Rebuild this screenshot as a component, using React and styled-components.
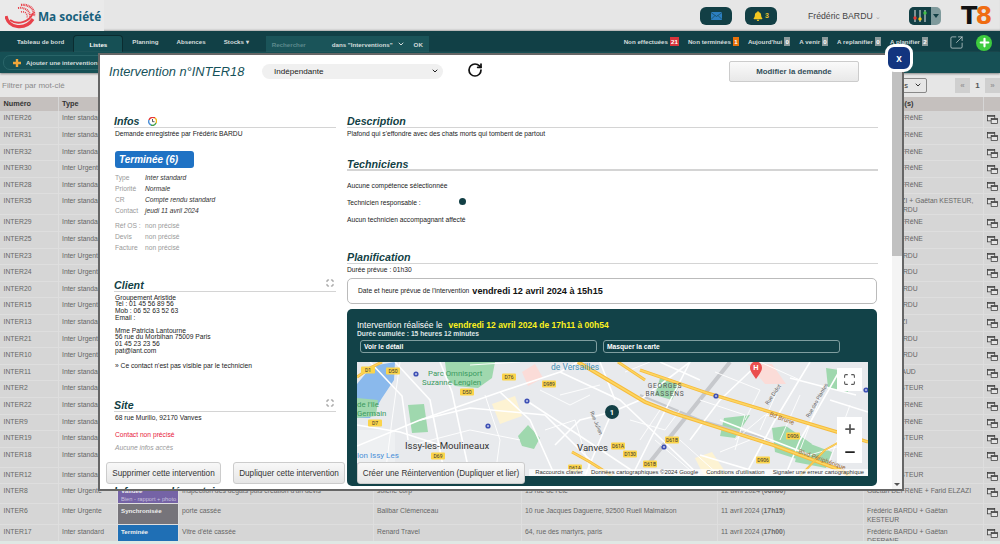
import React from "react";
import styled, { createGlobalStyle } from "styled-components";
import { Maximize, Minus, Plus, RotateCw, SquareArrowOutUpRight, ChevronDown } from "lucide-react";
import { FaBell } from "react-icons/fa";

const GlobalStyle = createGlobalStyle`
  html, body {
    margin: 0;
    height: 544px;
    overflow: hidden;
    background: #dfe8e4;
    font-family: "Liberation Sans", Arial, sans-serif;
  }
  * { box-sizing: border-box; }
`;

const Page = styled.div`
  position: relative;
  width: 1000px;
  height: 544px;
  overflow: hidden;
`;

/* ---------- top bars ---------- */

const TopBar = styled.header`
  height: 31px;
  background: #e6e6e6;
  display: flex;
  align-items: center;
  box-shadow: inset 0 -2px 2px -1px #aaa;
`;

const Brand = styled.div`
  width: 104px;
  height: 31px;
  padding-left: 5px;
  display: flex;
  align-items: center;
  background: #eaeaea;
`;

const BrandName = styled.span`
  color: #17607c;
  font-size: 11.8px;
  font-weight: 700;
  font-family: "Open Sans", sans-serif;
  white-space: nowrap;
`;

const TopTools = styled.div`
  margin-left: auto;
  display: flex;
  align-items: center;
`;

const RoundBtn = styled.div`
  width: 32px;
  height: 18px;
  margin-right: ${(p) => p.$mr}px;
  border-radius: 6px;
  background: #123f45;
  display: flex;
  align-items: center;
  justify-content: center;
  gap: 2px;
  color: #e8c02c;
  font-size: 7px;
  font-weight: 700;
`;

const UserName = styled.div`
  width: 101px;
  color: #444;
  font-size: 8.7px;
  white-space: nowrap;
  span { color: #aaa; font-size: 7px; }
`;

const Mixer = styled.div`
  width: 32px;
  height: 18px;
  margin-right: 20px;
  border-radius: 5px;
  overflow: hidden;
  display: flex;
  background: #7f9a9c;
`;

const MixerFace = styled.div`
  width: 22px;
  background: #123f45;
  display: flex;
  align-items: center;
  justify-content: center;
`;

const MixerCaret = styled.div`
  flex: 1;
  display: flex;
  align-items: center;
  justify-content: center;
  &::after {
    content: "";
    border: 3px solid transparent;
    border-top: 4px solid #123f45;
    border-bottom: 0;
  }
`;

const Logo8 = styled.div`
  width: 39px;
  font-size: 24px;
  line-height: 24px;
  font-weight: 700;
  letter-spacing: -2px;
  color: #111;
  font-family: "DejaVu Sans", sans-serif;
  span { color: #ef6c12; }
`;

const NavBar = styled.nav`
  height: 21px;
  background: #114046;
  display: flex;
  align-items: flex-end;
  color: #d4dcdc;
  font-size: 6.2px;
  font-weight: 700;
`;

const NavItem = styled.div`
  height: 21px;
  padding-top: 7px;
  margin-left: ${(p) => p.$ml}px;
  white-space: nowrap;
`;

const NavTab = styled.div`
  width: 50px;
  height: 17px;
  margin-left: 9px;
  padding-top: 5px;
  text-align: center;
  color: #fff;
  background: #165055;
  border: 1px solid #0b2c30;
  border-bottom: 0;
  border-radius: 4px 4px 0 0;
`;

const SearchBox = styled.div`
  width: 163px;
  height: 16px;
  margin-left: 17px;
  padding-left: 6px;
  background: #1a5459;
  display: flex;
  align-items: center;
  white-space: nowrap;
`;

const SearchHint = styled.span`
  width: 60px;
  color: #5d8a8d;
`;

const Counters = styled.div`
  margin-left: auto;
  height: 21px;
  padding-top: 6px;
  display: flex;
  gap: 9px;
`;

const Counter = styled.div`
  display: flex;
  gap: 2px;
  white-space: nowrap;
  line-height: 9px;
`;

const Badge = styled.span`
  min-width: 6px;
  padding: 0 1px;
  height: 9px;
  color: #fff;
  text-align: center;
  background: ${(p) => p.$bg};
`;

const NavIcons = styled.div`
  width: 72px;
  height: 21px;
  padding: 2px 8px 0 21px;
  display: flex;
  align-items: center;
  justify-content: space-between;
`;

const GreenPlus = styled.div`
  width: 16px;
  height: 16px;
  border-radius: 50%;
  background: #3ecb3e;
  display: flex;
  align-items: center;
  justify-content: center;
`;

const SubBar = styled.div`
  height: 21px;
  background: #165055;
  padding: 3px 3px;
  box-shadow: 0 1px 2px #888;
  position: relative;
`;

const AddPill = styled.div`
  width: 110px;
  height: 15px;
  border: 1px solid #2a6569;
  border-radius: 7px;
  padding-left: 9px;
  display: flex;
  align-items: center;
  gap: 5px;
  color: #d4dcdc;
  font-size: 6.2px;
  font-weight: 700;
  white-space: nowrap;
`;

const FilterBar = styled.div`
  height: 24px;
  background: #e6e6e6;
  display: flex;
  align-items: center;
  padding-left: 2px;
`;

const FilterHint = styled.span`
  color: #8a8a8a;
  font-size: 8px;
`;

const PageSize = styled.div`
  margin-left: auto;
  width: 42px;
  height: 15px;
  border: 1px solid #888;
  border-radius: 2px;
  display: flex;
  align-items: center;
  justify-content: flex-end;
  gap: 6px;
  padding-right: 4px;
  color: #333;
  font-size: 7.5px;
`;

const Pager = styled.div`
  margin-left: 28px;
  display: flex;
  height: 15px;
  color: #888;
  font-size: 8px;
  font-weight: 700;
`;

const PagerCell = styled.div`
  width: 15px;
  display: flex;
  align-items: center;
  justify-content: center;
  background: ${(p) => (p.$on ? "#e6e6e6" : "#cfcfcf")};
  color: ${(p) => (p.$on ? "#555" : "#999")};
`;

/* ---------- table behind the modal ---------- */

const TableClip = styled.div`
  height: 444px;
  overflow: hidden;
`;

const Table = styled.table`
  width: 1000px;
  table-layout: fixed;
  border-collapse: collapse;
  font-size: 6.8px;
  line-height: 8.5px;
  color: #666;
`;

const Th = styled.th`
  height: 14px;
  padding: 0 3px 0 3.5px;
  text-align: left;
  font-size: 7.3px;
  color: #333;
  background: #c5c0be;
  border-right: 1px solid #d6d6d6;
  white-space: nowrap;
`;

const Row = styled.tr`
  height: ${(p) => (p.$tall ? 20 : 16.6)}px;
`;

const Td = styled.td`
  padding: 3px 3px 0 3.5px;
  vertical-align: top;
  background: #d6d6d6;
  border: 1px solid #dedede;
  border-width: 0 1px 1px 0;
  overflow: hidden;
`;

const StatusTd = styled(Td)`
  background: ${(p) => p.$bg};
  color: #eee;
  font-weight: 700;
  font-size: 6.2px;
  small {
    display: block;
    font-size: 5.7px;
    line-height: 7px;
    font-weight: 400;
    color: #c9c0de;
    white-space: nowrap;
  }
`;

const IconTd = styled(Td)`
  padding: 4px 0 0 3px;
`;

const TimeText = styled.b`
  color: #666;
`;

/* ---------- modal ---------- */

const Modal = styled.section`
  position: absolute;
  left: 98px;
  top: 53px;
  width: 806px;
  height: 438px;
  border: 2px solid #666;
  background: #fff;
  display: flex;
`;

const CloseBtn = styled.div`
  position: absolute;
  top: -11px;
  right: -11px;
  width: 28px;
  height: 28px;
  border: 3px solid #fff;
  border-radius: 9px;
  background: #12357f;
  color: #fff;
  font-size: 10px;
  font-weight: 700;
  display: flex;
  align-items: center;
  justify-content: center;
  z-index: 3;
`;

const ModalMain = styled.div`
  flex: 1;
  overflow: hidden;
  position: relative;
`;

const Scrollbar = styled.div`
  width: 10px;
  background: #f4f4f4;
  position: relative;
  &::before {
    content: "";
    display: block;
    height: 201px;
    background: #c1c1c1;
  }
  &::after {
    content: "";
    position: absolute;
    left: 2px;
    bottom: 3px;
    border: 3px solid transparent;
    border-top: 3px solid #555;
    border-bottom: 0;
  }
`;

const ModalHead = styled.div`
  height: 32px;
  padding-left: 9px;
  display: flex;
  align-items: center;
`;

const ModalTitle = styled.h1`
  margin: 0;
  width: 153px;
  font-size: 12.8px;
  font-style: italic;
  font-weight: 400;
  color: #16525a;
  white-space: nowrap;
`;

const StateSelect = styled.div`
  width: 181px;
  height: 15px;
  padding: 0 4px 0 12px;
  border-radius: 8px;
  background: #f0f0f0;
  display: flex;
  align-items: center;
  justify-content: space-between;
  font-size: 8.1px;
  color: #222;
`;

const RefreshSlot = styled.div`
  width: 286px;
  padding-left: 24px;
  display: flex;
  align-items: center;
  margin-top: -2px;
`;

const EditBtn = styled.div`
  width: 130px;
  height: 21px;
  border: 1px solid #ccc;
  border-radius: 2px;
  background: linear-gradient(#fafafa, #e8e8e8);
  display: flex;
  align-items: center;
  justify-content: center;
  font-size: 7.8px;
  font-weight: 700;
  color: #33505a;
`;

const Columns = styled.div`
  margin-top: 28px;
  padding-left: 14px;
  display: flex;
  gap: 11px;
  font-size: 6.7px;
  line-height: 8px;
  color: #222;
`;

const LeftCol = styled.div`
  width: 222px;
  flex: none;
  & > p, & > div, & > dl { margin-left: 1px; }
`;

const RightCol = styled.div`
  width: 531px;
  flex: none;
`;

const Heading = styled.h2`
  margin: ${(p) => p.$mt || 0}px 0 0;
  height: 13px;
  border-bottom: ${(p) => (p.$thick ? 2 : 1)}px solid #d4d4d4;
  font-size: 10.7px;
  line-height: 12px;
  font-style: italic;
  font-weight: 700;
  color: #123f45;
  display: flex;
  align-items: flex-start;
  justify-content: space-between;
  padding-right: 2px;
  white-space: nowrap;
`;

const HeadLeft = styled.span`
  display: flex;
  gap: 8px;
  align-items: center;
`;

const Para = styled.p`
  margin: ${(p) => p.$mt || 0}px 0 0;
  color: ${(p) => p.$color || "#222"};
  font-style: ${(p) => (p.$italic ? "italic" : "normal")};
`;

const Block = styled.div`
  margin-top: ${(p) => p.$mt}px;
  line-height: 6.8px;
`;

const StatusChip = styled.div`
  margin-top: 13px;
  width: 79px;
  height: 17px;
  padding-left: 4px;
  border-radius: 3px;
  background: #1f72c4;
  color: #fff;
  font-size: 10px;
  line-height: 17px;
  font-weight: 700;
  font-style: italic;
`;

const Details = styled.dl`
  margin-top: ${(p) => p.$mt}px;
  margin-bottom: 0;
  margin-right: 0;
  display: grid;
  grid-template-columns: 30px 1fr;
  grid-auto-rows: 11px;
  align-items: center;
  dt { color: #999; }
  dd {
    margin: 0;
    font-style: ${(p) => (p.$plain ? "normal" : "italic")};
    color: ${(p) => (p.$plain ? "#999" : "#333")};
  }
`;

const TechLine = styled.div`
  margin-top: ${(p) => p.$mt}px;
  display: flex;
  align-items: flex-start;
`;

const TechDot = styled.span`
  width: 7px;
  height: 7px;
  margin: -1px 0 0 38px;
  border-radius: 50%;
  background: #123f45;
`;

const PlannedBox = styled.div`
  margin-top: 4px;
  width: 530px;
  height: 26px;
  padding-left: 10px;
  border: 1px solid #bbb;
  border-radius: 5px;
  display: flex;
  align-items: center;
  gap: 3px;
  b { font-size: 9.1px; color: #111; }
`;

const Panel = styled.div`
  margin-top: 5px;
  width: 530px;
  height: 177px;
  padding: 11px 9px 10px 10px;
  border-radius: 5px;
  background: #124248;
  color: #fff;
`;

const DoneLine = styled.div`
  font-size: 8.5px;
  line-height: 10px;
  display: flex;
  gap: 6px;
  b { color: #fdf01e; }
`;

const DoneSub = styled.div`
  font-weight: 700;
  color: #dfe6e6;
  line-height: 7px;
`;

const PanelBtns = styled.div`
  margin: 3px 0 9px 3px;
  display: flex;
  gap: 6px;
`;

const PanelBtn = styled.div`
  width: 237px;
  height: 13px;
  padding-left: 3px;
  border: 1px solid #7f9ea0;
  border-radius: 3px;
  font-weight: 700;
  line-height: 11px;
`;

const MapBox = styled.div`
  position: relative;
  width: 511px;
  height: 114px;
  overflow: hidden;
  background: #e8eaed;
  svg { display: block; }
`;

const MapCtrl = styled.div`
  position: absolute;
  left: 480px;
  top: ${(p) => p.$top}px;
  width: 25px;
  background: #fff;
  color: #555;
  display: flex;
  flex-direction: column;
  align-items: center;
  justify-content: center;
`;

const CtrlCell = styled.div`
  height: ${(p) => p.$h}px;
  width: 100%;
  display: flex;
  align-items: center;
  justify-content: center;
`;

const Attribution = styled.div`
  position: absolute;
  right: 0;
  bottom: 0;
  width: 339px;
  height: 7px;
  padding-right: 4px;
  display: flex;
  justify-content: flex-end;
  gap: 8px;
  background: rgba(255, 255, 255, 0.7);
  color: #333;
  font-size: 5.9px;
  line-height: 7px;
  white-space: nowrap;
`;

const FooterBtns = styled.div`
  position: absolute;
  left: 6px;
  top: 407px;
  display: flex;
  gap: 12px;
`;

const FooterBtn = styled.div`
  width: ${(p) => p.$w}px;
  height: 22px;
  border: 1px solid #ccc;
  border-radius: 3px;
  background: linear-gradient(#f8f8f8, #e6e6e6);
  color: #333;
  font-size: 8.2px;
  display: flex;
  align-items: center;
  justify-content: center;
  white-space: nowrap;
`;

/* ---------- drawings ---------- */

const LogoMark = () => (
  <svg width="33" height="26" viewBox="0 0 33 26">
    <g fill="none" stroke="#e8414a">
      <path d="M1 13 C3 25 20 28 28 16" strokeWidth="3.2" />
      <path d="M5 17 C12 22 24 20 28 10" strokeWidth="2" />
      <path d="M16 2 C24 1 30 6 29 13" strokeWidth="2.4" strokeDasharray="1 .6" />
      <path d="M13 5 C20 4 26 8 25 15" strokeWidth="2" strokeDasharray="1 .8" />
      <path d="M16 9 C20 8 23 11 22 15" strokeWidth="1.6" strokeDasharray="1 1" />
    </g>
  </svg>
);

const MailIcon = () => (
  <svg width="11" height="8" viewBox="0 0 11 8">
    <rect width="11" height="8" rx="0.6" fill="#2c7fc0" />
    <path d="M0 .5 L5.5 4.5 L11 .5 M0 7.5 L4 3.5 M11 7.5 L7 3.5" stroke="#123f45" strokeWidth=".6" fill="none" />
  </svg>
);

const MixerIcon = () => (
  <svg width="16" height="14" viewBox="0 0 16 14">
    <g stroke="#e8e8e8" strokeWidth="1">
      <path d="M3 1V13M8 1V13M13 1V13" />
    </g>
    <circle cx="3" cy="9" r="1.7" fill="#e53935" />
    <circle cx="8" cy="10" r="1.7" fill="#f5c518" />
    <circle cx="13" cy="4" r="1.7" fill="#43c048" />
  </svg>
);

const OrangePlus = () => (
  <svg width="8" height="8" viewBox="0 0 8 8">
    <path d="M4 0V8M0 4H8" stroke="#f0a63a" strokeWidth="2.4" />
  </svg>
);

const WindowsIcon = () => (
  <svg width="11" height="9" viewBox="0 0 12 10">
    <g fill="#e4e4e4" stroke="#333" strokeWidth=".8">
      <rect x=".5" y=".5" width="8" height="6" />
      <rect x="4.5" y="4" width="7" height="5.5" />
    </g>
    <path d="M.5 1.4H8.5M4.5 4.9H11.5" stroke="#333" strokeWidth="1" />
  </svg>
);

const ClockMark = () => (
  <svg width="9" height="9" viewBox="0 0 9 9">
    <g fill="none" strokeWidth="1.4">
      <path d="M1 3A4 4 0 0 1 7 1" stroke="#e53935" />
      <path d="M7 1A4 4 0 0 1 8 6" stroke="#f5b916" />
      <path d="M8 6A4 4 0 0 1 3 8" stroke="#43a047" />
      <path d="M3 8A4 4 0 0 1 1 3" stroke="#4a8fd8" />
    </g>
    <path d="M4.5 2V4.7H6.5" stroke="#333" strokeWidth=".8" fill="none" />
  </svg>
);

const whiteRoads = [
  "357,446 420,420 500,392 560,372 578,362",
  "420,420 470,408 545,415 600,470",
  "440,362 452,392 470,476",
  "395,362 430,400 445,476",
  "500,392 530,420 555,476",
  "527,401 580,436 640,476",
  "560,372 620,400 700,476",
  "612,412 640,400 690,362",
  "612,412 600,440 585,476",
  "612,412 580,420 555,445",
  "690,362 650,440 632,476",
  "760,362 720,400 690,440",
  "810,362 775,420 745,476",
  "840,370 800,440 785,476",
  "790,378 856,395",
  "720,420 810,455",
  "700,455 770,476",
  "357,425 400,432 440,445",
  "370,362 402,396 408,440",
  "600,362 615,400",
  "660,362 700,380",
  "830,400 868,412",
];

const thinRoads = [
  "400,362 392,420 385,476",
  "412,445 470,430 520,440",
  "470,365 520,362",
  "485,395 500,440 495,476",
  "540,390 570,405 590,395",
  "545,430 575,420 590,470",
  "625,372 650,362",
  "630,420 665,430 680,410",
  "655,440 690,470",
  "700,400 745,415 735,450",
  "715,372 760,390 745,420",
  "735,440 765,415 800,420",
  "780,385 760,430",
  "800,395 780,440",
  "820,398 800,450",
  "850,405 830,460",
  "760,362 800,380",
  "810,455 860,440",
  "660,410 640,440",
  "680,440 720,476",
  "720,452 750,440",
  "560,395 600,385",
];

const yellowRoads = [
  { d: "640,370 707,393 837,432 868,442", w: 3.4 },
  { d: "578,362 645,402 673,413 773,445 840,470 850,476", w: 3.8 },
  { d: "618,362 645,380", w: 3 },
  { d: "357,377 370,368 382,362", w: 3 },
  { d: "572,452 590,462 612,476", w: 3 },
  { d: "800,476 825,450 850,436", w: 2 },
];

const greens = [
  "445,362 495,362 492,378 478,388 455,386 447,378",
  "408,405 424,404 428,432 412,433",
  "518,436 528,425 540,438 534,449 522,446",
  "357,398 378,400 376,416 357,418",
  "724,418 750,415 735,438 720,436",
  "772,428 786,426 812,444 800,460 775,452",
  "800,440 832,452 826,468 795,462",
  "826,368 852,372 848,392 828,388",
  "660,378 680,384 672,400 655,395",
];

const metro = [
  [416, 374], [527, 401], [488, 426], [716, 396], [664, 447], [866, 390],
];

const shields = [
  ["D1", 368, 370], ["D50", 393, 371], ["D76", 509, 377], ["D989", 549, 384],
  ["D50", 467, 392], ["D7", 375, 423], ["D69", 438, 456], ["D61A", 618, 446],
  ["D130", 630, 454], ["D61B", 672, 440], ["D61B", 650, 464], ["D906", 793, 436],
  ["D906", 763, 460], ["D61A", 575, 468],
];

const MapDrawing = () => (
  <svg width="511" height="114" viewBox="357 362 511 114" fontFamily="Roboto, sans-serif">
    <rect x="357" y="362" width="511" height="114" fill="#e8eaed" />
    <path d="M357 384 L372 366 L395 362 L394 380 L382 398 L370 418 L357 418Z" fill="#8ab9ec" />
    <path d="M357 430 H395 V476 H357Z" fill="#eef0f2" />
    <path d="M492 404 L515 396 L522 416 L500 424Z" fill="#fdf3d3" />
    <path d="M695 458 L712 452 L728 476 L704 476Z" fill="#fdf3d3" />
    <path d="M748 364 L772 364 L786 384 L765 384Z" fill="#fbdcd8" />
    <path d="M522 372 L535 364 L543 378 L528 386Z" fill="#fbdcd8" />
    {greens.map((p) => (
      <polygon key={p} points={p} fill="#9fd8ae" />
    ))}
    <polyline points="730,362 690,412 650,462" fill="none" stroke="#c6c8cc" strokeWidth="4" />
    <polyline points="640,395 700,420 770,440" fill="none" stroke="#c6c8cc" strokeWidth="2" />
    {thinRoads.map((p) => (
      <polyline key={p} points={p} fill="none" stroke="#fff" strokeWidth="0.9" />
    ))}
    {whiteRoads.map((p) => (
      <polyline key={p} points={p} fill="none" stroke="#fff" strokeWidth="1.6" />
    ))}
    {yellowRoads.map((r) => (
      <g key={r.d} fill="none">
        <polyline points={r.d} stroke="#f6bb3c" strokeWidth={r.w} />
        <polyline points={r.d} stroke="#fdd663" strokeWidth={r.w / 2.2} />
      </g>
    ))}
    {metro.map(([x, y]) => (
      <g key={x}>
        <circle cx={x} cy={y} r="2.6" fill="#3f51b5" />
        <circle cx={x} cy={y} r="1" fill="#c5cae9" />
      </g>
    ))}
    {shields.map(([t, x, y]) => (
      <g key={t + x}>
        <rect x={x - 7} y={y - 3.5} width="14" height="7" rx="1" fill="#fbd44a" />
        <text x={x} y={y + 2} textAnchor="middle" fontSize="5" fill="#333">{t}</text>
      </g>
    ))}
    <g fontSize="7.8" fill="#3c9a5f">
      <text x="428" y="376">Parc Omnisport</text>
      <text x="422" y="385">Suzanne Lenglen</text>
      <text x="357" y="407">de l'Ile</text>
      <text x="357" y="416">Germain</text>
    </g>
    <text x="551" y="370" fontSize="8.5" fill="#3f8fb5">de Versailles</text>
    <g fontSize="8" fill="#4a8fd8">
      <text x="357" y="458">lon Issy Les</text>
      <text x="357" y="467">ulineaux</text>
    </g>
    <text x="405" y="449" fontSize="9.6" fill="#333">Issy-les-Moulineaux</text>
    <text x="577" y="451" fontSize="9.6" fill="#333">Vanves</text>
    <g fontSize="6.6" fill="#555" letterSpacing=".8" textAnchor="middle">
      <text x="665" y="388">GEORGES</text>
      <text x="665" y="396">BRASSENS</text>
    </g>
    <text x="0" y="0" fontSize="5.4" fill="#666" transform="translate(590,412) rotate(68)">Rue Julien</text>
    <text x="0" y="0" fontSize="5.4" fill="#666" transform="translate(768,405) rotate(-55)">Rue Didot</text>
    <text x="0" y="0" fontSize="5.4" fill="#666" transform="translate(809,418) rotate(-60)">Rue des Plantes</text>
    <text x="0" y="0" fontSize="6.4" fill="#9a6a3c" transform="translate(769,416) rotate(20)">Bd Brune</text>
    <text x="0" y="0" fontSize="6.4" fill="#9a6a3c" transform="translate(798,453) rotate(20)">Blvd Périphérique</text>
    <circle cx="612" cy="412" r="7" fill="#123f45" />
    <text x="612" y="415" textAnchor="middle" fontSize="7.5" fontWeight="700" fill="#fff">1</text>
    <path d="M756 379 C752 373 750 371 750 367.500 A6 6 0 0 1 762 367.500 C762 371 760 373 756 379Z" fill="#ea4f4f" />
    <text x="756" y="370" textAnchor="middle" fontSize="7.5" fontWeight="700" fill="#fff">H</text>
  </svg>
);

/* ---------- data ---------- */

const columns = ["Numéro", "Type", "Statut", "Description", "Client", "Adresse", "Date", "Technicien(s)", ""];
const widths = [58, 59, 61, 195, 148, 196, 146, 120, 17];

const STD = "Inter standard";
const URG = "Inter Urgente";
const GD = "Gaëtan DEFRêNE";
const FB = "Frédéric BARDU";
const GK = "Gaëtan KESTEUR";

const rows = [
  { id: "INTER26", type: STD, tech: GD },
  { id: "INTER31", type: STD, tech: GD },
  { id: "INTER32", type: STD, tech: GD },
  { id: "INTER30", type: URG, tech: GD },
  { id: "INTER28", type: STD, tech: GD },
  { id: "INTER35", type: STD, tech: "Farid ELZAZI + Gaëtan KESTEUR, Frédéric BARDU", tall: true },
  { id: "INTER29", type: STD, tech: GD },
  { id: "INTER25", type: STD, tech: GD },
  { id: "INTER23", type: URG, tech: FB },
  { id: "INTER24", type: URG, tech: FB },
  { id: "INTER20", type: STD, tech: FB },
  { id: "INTER15", type: URG, tech: FB },
  { id: "INTER13", type: STD, tech: "Farid ELZAZI" },
  { id: "INTER21", type: URG, tech: FB },
  { id: "INTER10", type: URG, tech: FB },
  { id: "INTER11", type: STD, tech: "Bruno RENAUD" },
  { id: "INTER2", type: STD, tech: GK },
  { id: "INTER22", type: STD, tech: GD },
  { id: "INTER9", type: STD, tech: GD },
  { id: "INTER19", type: STD, tech: GK },
  { id: "INTER18", type: STD, tech: GD, tall: true },
  { id: "INTER12", type: STD, tech: GK },
  {
    id: "INTER8", type: URG, tall: true, status: "Validée", sub: "Bien - rapport + photo", bg: "#7563a6",
    desc: "Inspection des dégâts puis création d'un devis", client: "solène corp", addr: "13 rue de l'été",
    date: "12 avril 2024", time: "06h00", tech: "Gaëtan DEFRêNE + Farid ELZAZI",
  },
  {
    id: "INTER6", type: URG, tall: true, status: "Synchronisée", bg: "#76747a",
    desc: "porte cassée", client: "Balibar Clémenceau", addr: "10 rue Jacques Daguerre, 92500 Rueil Malmaison",
    date: "11 avril 2024", time: "17h15", tech: "Frédéric BARDU + Gaëtan KESTEUR",
  },
  {
    id: "INTER17", type: STD, tall: true, status: "Terminée", bg: "#1f6fb5",
    desc: "Vitre d'été cassée", client: "Renard Travel", addr: "64, rue des martyrs, paris",
    date: "11 avril 2024", time: "17h00", tech: "Frédéric BARDU + Gaëtan DEFRêNE",
  },
];

const counters = [
  ["Non effectuées", 21, "#d8343c"],
  ["Non terminées", 1, "#e8720c"],
  ["Aujourd'hui", 0, "#8b9a9b"],
  ["A venir", 0, "#8b9a9b"],
  ["A replanifier", 0, "#8b9a9b"],
  ["A planifier", 2, "#8b9a9b"],
];

export default function App() {
  return (
    <Page>
      <GlobalStyle />
      <TopBar>
        <Brand>
          <LogoMark />
          <BrandName>Ma société</BrandName>
        </Brand>
        <TopTools>
          <RoundBtn $mr={13}><MailIcon /></RoundBtn>
          <RoundBtn $mr={31}><FaBell size={10} color="#f2c61f" />3</RoundBtn>
          <UserName>Frédéric BARDU <span>⌄</span></UserName>
          <Mixer>
            <MixerFace><MixerIcon /></MixerFace>
            <MixerCaret />
          </Mixer>
          <Logo8>T<span>8</span></Logo8>
        </TopTools>
      </TopBar>

      <NavBar>
        <NavItem $ml={17}>Tableau de bord</NavItem>
        <NavTab>Listes</NavTab>
        <NavItem $ml={9}>Planning</NavItem>
        <NavItem $ml={18}>Absences</NavItem>
        <NavItem $ml={18}>Stocks ▾</NavItem>
        <SearchBox>
          <SearchHint>Rechercher</SearchHint>
          dans "Interventions"
          <ChevronDown size={8} strokeWidth={3} style={{ margin: "0 9px 0 4px" }} />
          OK
        </SearchBox>
        <Counters>
          {counters.map(([label, n, bg]) => (
            <Counter key={label}>{label} <Badge $bg={bg}>{n}</Badge></Counter>
          ))}
        </Counters>
        <NavIcons>
          <SquareArrowOutUpRight size={15} strokeWidth={1} color="#e8eeee" />
          <GreenPlus><Plus size={13} strokeWidth={4} color="#fff" /></GreenPlus>
        </NavIcons>
      </NavBar>

      <SubBar>
        <AddPill><OrangePlus />Ajouter une intervention</AddPill>
      </SubBar>

      <FilterBar>
        <FilterHint>Filtrer par mot-clé</FilterHint>
        <PageSize>lignes <ChevronDown size={8} strokeWidth={3} /></PageSize>
        <Pager>
          <PagerCell>«</PagerCell>
          <PagerCell $on>1</PagerCell>
          <PagerCell>»</PagerCell>
        </Pager>
      </FilterBar>

      <TableClip>
        <Table>
          <colgroup>
            {widths.map((w, i) => <col key={i} width={w} />)}
          </colgroup>
          <thead>
            <tr>{columns.map((c, i) => <Th key={i}>{c}</Th>)}</tr>
          </thead>
          <tbody>
            {rows.map((r) => (
              <Row key={r.id} $tall={r.tall}>
                <Td>{r.id}</Td>
                <Td>{r.type}</Td>
                <StatusTd $bg={r.bg || "#d6d6d6"}>
                  {r.status}
                  {r.sub && <small>{r.sub}</small>}
                </StatusTd>
                <Td>{r.desc}</Td>
                <Td>{r.client}</Td>
                <Td>{r.addr}</Td>
                <Td>{r.date && <>{r.date} (<TimeText>{r.time}</TimeText>)</>}</Td>
                <Td>{r.tech}</Td>
                <IconTd><WindowsIcon /></IconTd>
              </Row>
            ))}
          </tbody>
        </Table>
      </TableClip>

      <Modal>
        <CloseBtn>x</CloseBtn>
        <ModalMain>
          <ModalHead>
            <ModalTitle>Intervention n°INTER18</ModalTitle>
            <StateSelect>Indépendante <ChevronDown size={8} strokeWidth={3} /></StateSelect>
            <RefreshSlot><RotateCw size={16} strokeWidth={2.6} color="#111" /></RefreshSlot>
            <EditBtn>Modifier la demande</EditBtn>
          </ModalHead>

          <Columns>
            <LeftCol>
              <Heading><HeadLeft>Infos <ClockMark /></HeadLeft></Heading>
              <Para $mt={2}>Demande enregistrée par Frédéric BARDU</Para>
              <StatusChip>Terminée (6)</StatusChip>
              <Details $mt={4.5}>
                <dt>Type</dt><dd>Inter standard</dd>
                <dt>Priorité</dt><dd>Normale</dd>
                <dt>CR</dt><dd>Compte rendu standard</dd>
                <dt>Contact</dt><dd>jeudi 11 avril 2024</dd>
              </Details>
              <Details $mt={4} $plain>
                <dt>Réf OS :</dt><dd>non précisé</dd>
                <dt>Devis</dt><dd>non précisé</dd>
                <dt>Facture</dt><dd>non précisé</dd>
              </Details>

              <Heading $mt={25.5}>Client <Maximize size={8} color="#555" /></Heading>
              <Block $mt={2.6}>
                Groupement Aristide<br />
                Tel : 01 45 56 89 56<br />
                Mob : 06 52 63 52 63<br />
                Email :
              </Block>
              <Block $mt={5.8}>
                Mme Patricia Lantourne<br />
                56 rue du Morbihan 75009 Paris<br />
                01 45 23 23 56<br />
                pat@lant.com
              </Block>
              <Para $mt={7.3}>» Ce contact n'est pas visible par le technicien</Para>

              <Heading $mt={29}>Site <Maximize size={8} color="#555" /></Heading>
              <Para $mt={2}>68 rue Murillo, 92170 Vanves</Para>
              <Para $mt={9} $color="#e8203a">Contact non précisé</Para>
              <Para $mt={5} $color="#999" $italic>Aucune infos accès</Para>
              <Heading $mt={33}>Infos complémentaires</Heading>
            </LeftCol>

            <RightCol>
              <Heading>Description</Heading>
              <Para $mt={2}>Plafond qui s'effondre avec des chats morts qui tombent de partout</Para>

              <Heading $mt={20} $thick>Techniciens</Heading>
              <TechLine $mt={10.5}>Aucune compétence sélectionnée</TechLine>
              <TechLine $mt={9.5}>Technicien responsable :<TechDot /></TechLine>
              <TechLine $mt={9}>Aucun technicien accompagnant affecté</TechLine>

              <Heading $mt={27}>Planification</Heading>
              <Para $mt={2}>Durée prévue : 01h30</Para>
              <PlannedBox>
                Date et heure prévue de l'intervention <b>vendredi 12 avril 2024 à 15h15</b>
              </PlannedBox>

              <Panel>
                <DoneLine>Intervention réalisée le <b>vendredi 12 avril 2024 de 17h11 à 00h54</b></DoneLine>
                <DoneSub>Durée cumulée : 15 heures 12 minutes</DoneSub>
                <PanelBtns>
                  <PanelBtn>Voir le détail</PanelBtn>
                  <PanelBtn>Masquer la carte</PanelBtn>
                </PanelBtns>
                <MapBox>
                  <MapDrawing />
                  <MapCtrl $top={6}>
                    <CtrlCell $h={23}><Maximize size={13} strokeWidth={2} /></CtrlCell>
                  </MapCtrl>
                  <MapCtrl $top={55}>
                    <CtrlCell $h={23}><Plus size={14} strokeWidth={3} /></CtrlCell>
                    <CtrlCell $h={23}><Minus size={14} strokeWidth={3} color="#222" /></CtrlCell>
                  </MapCtrl>
                  <Attribution>
                    <span>Raccourcis clavier</span>
                    <span>Données cartographiques ©2024 Google</span>
                    <span>Conditions d'utilisation</span>
                    <span>Signaler une erreur cartographique</span>
                  </Attribution>
                </MapBox>
              </Panel>
            </RightCol>
          </Columns>

          <FooterBtns>
            <FooterBtn $w={115}>Supprimer cette intervention</FooterBtn>
            <FooterBtn $w={112}>Dupliquer cette intervention</FooterBtn>
            <FooterBtn $w={168}>Créer une Réintervention (Dupliquer et lier)</FooterBtn>
          </FooterBtns>
        </ModalMain>
        <Scrollbar />
      </Modal>
    </Page>
  );
}
